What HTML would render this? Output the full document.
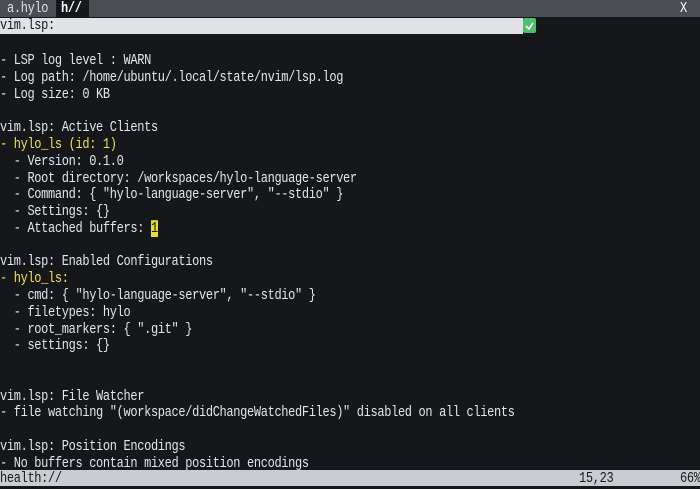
<!DOCTYPE html>
<html><head><style>
body{margin:0;background:#15171b;width:700px;height:486px;overflow:hidden}
.r{position:absolute;left:0;height:16.76px;line-height:16.76px;font-family:"Liberation Mono",monospace;font-size:12px;letter-spacing:-0.34px;color:#e4e6ea;white-space:pre;transform:scaleY(1.2);transform-origin:0 0;margin-top:1px}
.y{color:#f2e05a}
</style></head><body>
<div style="position:absolute;left:0;top:0;width:700px;height:17px;background:#4b4d52"></div>
<div style="position:absolute;left:56px;top:0;width:33px;height:17px;background:#15171b"></div>
<div class="r" style="top:-2px;left:7px;color:#dfe1e4">a.hylo</div>
<div class="r" style="top:-2px;left:61px;color:#fff"><b>h//</b></div>
<div class="r" style="top:-2px;left:680px;color:#fff">X</div>
<div style="position:absolute;left:0;top:18px;width:523px;height:16px;background:#e0e2e6"></div>
<div style="position:absolute;left:523px;top:18px;width:13px;height:15px;background:#4fbf6c;border-radius:2px"></div>
<svg style="position:absolute;left:523px;top:18px" width="13" height="15"><path d="M3 8 L6 11 L10 5" stroke="#fff" stroke-width="1.6" fill="none"/></svg>
<div class="r" style="top:15px;color:#15171b">vim.lsp:</div>
<div class="r" style="top:50.3px">- LSP log level : WARN</div>
<div class="r" style="top:67px">- Log path: /home/ubuntu/.local/state/nvim/lsp.log</div>
<div class="r" style="top:83.8px">- Log size: 0 KB</div>
<div class="r" style="top:117.3px">vim.lsp: Active Clients</div>
<div class="r" style="top:134.1px"><span class="y">- hylo_ls (id: 1)</span></div>
<div class="r" style="top:150.8px">  - Version: 0.1.0</div>
<div class="r" style="top:167.6px">  - Root directory: /workspaces/hylo-language-server</div>
<div class="r" style="top:184.4px">  - Command: { "hylo-language-server", "--stdio" }</div>
<div class="r" style="top:201.1px">  - Settings: {}</div>
<div class="r" style="top:217.9px">  - Attached buffers: <span style="background:#e8df2a;color:#15171b">1</span></div>
<div class="r" style="top:251.4px">vim.lsp: Enabled Configurations</div>
<div class="r" style="top:268.2px"><span class="y">- hylo_ls:</span></div>
<div class="r" style="top:285px">  - cmd: { "hylo-language-server", "--stdio" }</div>
<div class="r" style="top:301.7px">  - filetypes: hylo</div>
<div class="r" style="top:318.5px">  - root_markers: { ".git" }</div>
<div class="r" style="top:335.2px">  - settings: {}</div>
<div class="r" style="top:385.5px">vim.lsp: File Watcher</div>
<div class="r" style="top:402.2px">- file watching "(workspace/didChangeWatchedFiles)" disabled on all clients</div>
<div class="r" style="top:435.8px">vim.lsp: Position Encodings</div>
<div class="r" style="top:452.5px">- No buffers contain mixed position encodings</div>
<div style="position:absolute;left:0;top:470px;width:700px;height:16px;background:#c9ccd1"></div>
<div class="r" style="top:467.5px;color:#15171b">health://</div>
<div class="r" style="top:467.5px;left:579px;color:#15171b">15,23</div>
<div class="r" style="top:467.5px;left:680px;color:#15171b">66%</div>
</body></html>
